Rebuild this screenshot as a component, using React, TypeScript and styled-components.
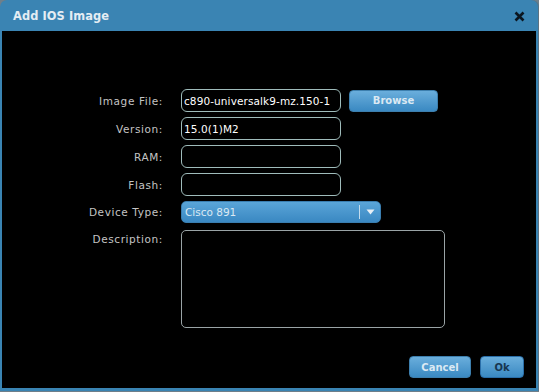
import styled, { createGlobalStyle } from 'styled-components';

const GlobalStyle = createGlobalStyle`
  html, body {
    margin: 0;
    padding: 0;
    background: #6f7f8a;
  }
  body {
    font-family: "DejaVu Sans", Verdana, sans-serif;
  }
`;

const fields = [
  { label: 'Image File:', value: 'c890-universalk9-mz.150-1' },
  { label: 'Version:', value: '15.0(1)M2' },
  { label: 'RAM:', value: '' },
  { label: 'Flash:', value: '' },
];

const App = () => {
  return (
    <>
      <GlobalStyle />
      <Dialog>
        <TitleBar>
          <Title>Add IOS Image</Title>
          <Close>
            <svg width="11" height="11" viewBox="0 0 11 11">
              <path d="M1.5 1.5 L9.5 9.5 M9.5 1.5 L1.5 9.5" stroke="#0b1620" strokeWidth="2.6" />
            </svg>
          </Close>
        </TitleBar>
        <Body>
          <Form>
            {fields.map((f, i) => (
              <Row key={f.label}>
                <Label>{f.label}</Label>
                <Input>{f.value}</Input>
                {i === 0 && <BlueButton $width={89}>Browse</BlueButton>}
              </Row>
            ))}
            <Row>
              <Label>Device Type:</Label>
              <Select>
                <span>Cisco 891</span>
                <Arrow>
                  <svg width="9" height="6" viewBox="0 0 9 6">
                    <path d="M0.5 0.5 L8.5 0.5 L4.5 5.5 Z" fill="#e8f0f6" />
                  </svg>
                </Arrow>
              </Select>
            </Row>
            <Row $top>
              <Label $top>Description:</Label>
              <TextArea />
            </Row>
          </Form>
          <Footer>
            <BlueButton $width={62}>Cancel</BlueButton>
            <BlueButton $width={44} $focused>Ok</BlueButton>
          </Footer>
        </Body>
      </Dialog>
    </>
  );
};

export default App;

const Dialog = styled.div`
  width: 539px;
  height: 391px;
  box-sizing: border-box;
  background: #3a84b3;
  border-radius: 7px 7px 0 0;
  display: flex;
  flex-direction: column;
  padding: 0 3px 3px 2px;
  box-shadow: inset -1px 0 0 #5d7382;
`;

const TitleBar = styled.div`
  height: 31px;
  display: flex;
  align-items: center;
  justify-content: space-between;
  padding: 0 11px 0 11px;
`;

const Title = styled.div`
  color: #e4edf3;
  font-weight: bold;
  font-size: 11.4px;
  letter-spacing: 0.1px;
`;

const Close = styled.div`
  display: flex;
  align-items: center;
  margin-top: 1px;
`;

const Body = styled.div`
  flex: 1;
  background: #000;
  display: flex;
  flex-direction: column;
  justify-content: space-between;
  padding: 58px 12px 10px 0;
`;

const Form = styled.div`
  display: flex;
  flex-direction: column;
  gap: 5px;
`;

const Row = styled.div<{ $top?: boolean }>`
  display: flex;
  align-items: ${p => (p.$top ? 'flex-start' : 'center')};
  gap: 8px;
`;

const Label = styled.div<{ $top?: boolean }>`
  width: 161px;
  margin-right: 10px;
  text-align: right;
  color: #c4c4c4;
  font-size: 10.5px;
  letter-spacing: 0.6px;
  padding-top: ${p => (p.$top ? '5px' : '0')};
`;

const Input = styled.div`
  width: 160px;
  height: 23px;
  box-sizing: border-box;
  border: 1.5px solid #9fbcbb;
  border-radius: 6px;
  color: #fff;
  font-size: 10.5px;
  letter-spacing: 0.1px;
  padding: 0 2px;
  display: flex;
  align-items: center;
  white-space: nowrap;
  overflow: hidden;
`;

const BlueButton = styled.div<{ $width: number; $focused?: boolean }>`
  width: ${p => p.$width}px;
  height: 22px;
  box-sizing: border-box;
  border-radius: 4px;
  background: linear-gradient(#6aaedc, #3a89c2);
  border: 1px solid ${p => (p.$focused ? '#2a6ea8' : '#3d7fae')};
  color: ${p => (p.$focused ? '#173650' : '#dbe9f3')};
  font-weight: bold;
  font-size: 10px;
  display: flex;
  align-items: center;
  justify-content: center;
`;

const Select = styled.div`
  width: 200px;
  height: 22px;
  box-sizing: border-box;
  border-radius: 5px;
  background: linear-gradient(#5aa5d8, #3a88c2);
  border: 1px solid #3a7eb0;
  color: #dbe9f3;
  font-size: 10.5px;
  display: flex;
  align-items: center;
  justify-content: space-between;
  padding-left: 3px;
`;

const Arrow = styled.div`
  width: 20px;
  height: 14px;
  border-left: 1px solid #c3dcee;
  display: flex;
  align-items: center;
  justify-content: center;
`;

const TextArea = styled.div`
  width: 264px;
  height: 98px;
  box-sizing: border-box;
  border: 1px solid #9aa4a6;
  border-radius: 5px;
  margin-top: 2px;
`;

const Footer = styled.div`
  display: flex;
  justify-content: flex-end;
  gap: 9px;
`;
